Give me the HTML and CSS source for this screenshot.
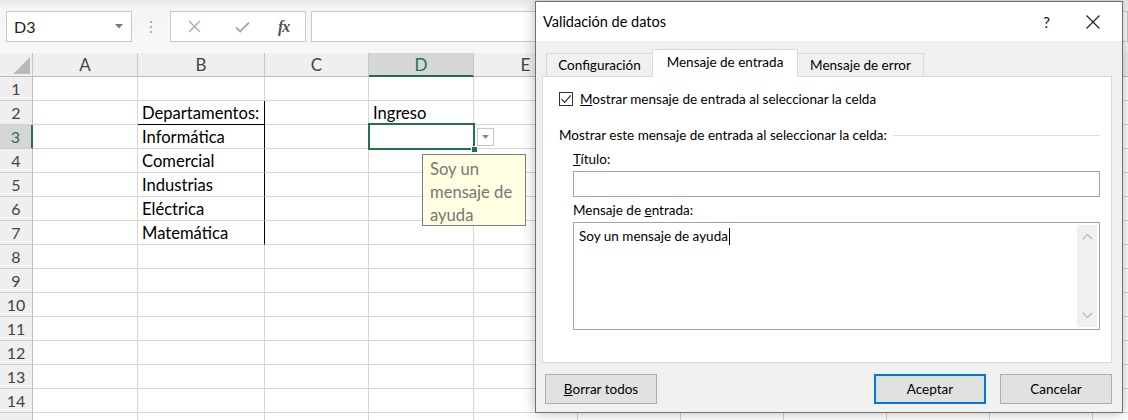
FILE: index.html
```html
<!DOCTYPE html>
<html lang="es">
<head>
<meta charset="utf-8">
<title>Validación de datos</title>
<link rel="stylesheet" href="styles.css">
</head>
<body>
<div class="app">
  <div class="fbar">
    <div class="namebox"><span>D3</span><svg class="nb-arrow" width="8" height="5" viewBox="0 0 8 5"><polygon points="0,0 8,0 4,4.5" fill="#7a7a7a"/></svg></div>
    <div class="grip"><span></span><span></span><span></span></div>
    <div class="fbtns">
      <svg class="ico-x" width="13" height="13" viewBox="0 0 13 13"><path d="M1 1L12 12M12 1L1 12" stroke="#a8a8a8" stroke-width="1.3" fill="none"/></svg>
      <svg class="ico-ok" width="15" height="12" viewBox="0 0 15 12"><path d="M1 6.5L5.2 10.5L14 1.5" stroke="#a8a8a8" stroke-width="1.8" fill="none"/></svg>
      <span class="fx">fx</span>
    </div>
    <div class="finput"></div>
  </div>

  <div class="sheet">
    <div class="row hdr">
      <div class="c rh corner"><svg width="17" height="17" viewBox="0 0 17 17"><polygon points="17,0 17,17 0,17" fill="#b9b9b9"/></svg></div>
      <div class="c wa ch">A</div>
      <div class="c wb ch">B</div>
      <div class="c wc ch">C</div>
      <div class="c wd ch on">D</div>
      <div class="c we ch">E</div>
      <div class="c rest ch"></div>
    </div>
    <div class="row"><div class="c rh">1</div><div class="c wa"></div><div class="c wb"></div><div class="c wc"></div><div class="c wd"></div><div class="c we"></div><div class="c rest"></div></div>
    <div class="row"><div class="c rh">2</div><div class="c wa"></div><div class="c wb bb br">Departamentos:</div><div class="c wc"></div><div class="c wd">Ingreso</div><div class="c we"></div><div class="c rest"></div></div>
    <div class="row"><div class="c rh on">3</div><div class="c wa"></div><div class="c wb br">Informática</div><div class="c wc"></div><div class="c wd"></div><div class="c we"></div><div class="c rest"></div></div>
    <div class="row"><div class="c rh">4</div><div class="c wa"></div><div class="c wb br">Comercial</div><div class="c wc"></div><div class="c wd"></div><div class="c we"></div><div class="c rest"></div></div>
    <div class="row"><div class="c rh">5</div><div class="c wa"></div><div class="c wb br">Industrias</div><div class="c wc"></div><div class="c wd"></div><div class="c we"></div><div class="c rest"></div></div>
    <div class="row"><div class="c rh">6</div><div class="c wa"></div><div class="c wb br">Eléctrica</div><div class="c wc"></div><div class="c wd"></div><div class="c we"></div><div class="c rest"></div></div>
    <div class="row"><div class="c rh">7</div><div class="c wa"></div><div class="c wb br">Matemática</div><div class="c wc"></div><div class="c wd"></div><div class="c we"></div><div class="c rest"></div></div>
    <div class="row"><div class="c rh">8</div><div class="c wa"></div><div class="c wb"></div><div class="c wc"></div><div class="c wd"></div><div class="c we"></div><div class="c rest"></div></div>
    <div class="row"><div class="c rh">9</div><div class="c wa"></div><div class="c wb"></div><div class="c wc"></div><div class="c wd"></div><div class="c we"></div><div class="c rest"></div></div>
    <div class="row"><div class="c rh">10</div><div class="c wa"></div><div class="c wb"></div><div class="c wc"></div><div class="c wd"></div><div class="c we"></div><div class="c rest"></div></div>
    <div class="row"><div class="c rh">11</div><div class="c wa"></div><div class="c wb"></div><div class="c wc"></div><div class="c wd"></div><div class="c we"></div><div class="c rest"></div></div>
    <div class="row"><div class="c rh">12</div><div class="c wa"></div><div class="c wb"></div><div class="c wc"></div><div class="c wd"></div><div class="c we"></div><div class="c rest"></div></div>
    <div class="row"><div class="c rh">13</div><div class="c wa"></div><div class="c wb"></div><div class="c wc"></div><div class="c wd"></div><div class="c we"></div><div class="c rest"></div></div>
    <div class="row"><div class="c rh">14</div><div class="c wa"></div><div class="c wb"></div><div class="c wc"></div><div class="c wd"></div><div class="c we"></div><div class="c rest"></div></div>
    <div class="row"><div class="c rh">15</div><div class="c wa"></div><div class="c wb"></div><div class="c wc"></div><div class="c wd"></div><div class="c we"></div><div class="c rest"></div></div>
  </div>

  <div class="selection"><span class="handle"></span></div>
  <div class="dd-btn"><svg width="7" height="4" viewBox="0 0 7 4"><polygon points="0,0 7,0 3.5,4" fill="#8a8a8a"/></svg></div>
  <div class="tip">Soy un<br>mensaje de<br>ayuda</div>
</div>

<div class="dlg">
  <div class="dlg-head">
    <span class="dlg-title">Validación de datos</span>
    <span class="dlg-help">?</span>
    <svg class="dlg-close" width="14" height="14" viewBox="0 0 14 14"><path d="M0.5 0.5L13.5 13.5M13.5 0.5L0.5 13.5" stroke="#1a1a1a" stroke-width="1.1" fill="none"/></svg>
  </div>
  <div class="dlg-body">
    <div class="tabs">
      <div class="tab t1">Configuración</div>
      <div class="tab t2 active">Mensaje de entrada</div>
      <div class="tab t3">Mensaje de error</div>
    </div>
    <div class="panel">
      <div class="chk-row">
        <span class="chk"><svg width="12" height="12" viewBox="0 0 12 12"><path d="M1.5 6.2L4.6 9.3L10.8 2.4" stroke="#2b2b2b" stroke-width="1.2" fill="none"/></svg></span>
        <span><u>M</u>ostrar mensaje de entrada al seleccionar la celda</span>
      </div>
      <div class="group"><span>Mostrar este mensaje de entrada al seleccionar la celda:</span><span class="rule"></span></div>
      <div class="fields">
        <div class="lbl"><u>T</u>ítulo:</div>
        <div class="input"></div>
        <div class="lbl lbl2">Mensaje de <u>e</u>ntrada:</div>
        <div class="textarea">
          <div class="ta-text">Soy un mensaje de ayuda<span class="caret"></span></div>
          <div class="vscroll">
            <svg width="11" height="7" viewBox="0 0 11 7"><path d="M1 6L5.5 1.5L10 6" stroke="#b5b5b5" stroke-width="1.1" fill="none"/></svg>
            <svg width="11" height="7" viewBox="0 0 11 7"><path d="M1 1L5.5 5.5L10 1" stroke="#b5b5b5" stroke-width="1.1" fill="none"/></svg>
          </div>
        </div>
      </div>
    </div>
    <div class="btns">
      <div class="btn"><u>B</u>orrar todos</div>
      <div class="spacer"></div>
      <div class="btn primary">Aceptar</div>
      <div class="btn">Cancelar</div>
    </div>
  </div>
</div>
</body>
</html>
```

FILE: styles.css
```css
* { box-sizing: border-box; }
html, body { margin: 0; padding: 0; }
body {
  width: 1128px;
  height: 420px;
  overflow: hidden;
  position: relative;
  background: #fff;
  font-family: Lato, "Noto Sans", sans-serif;
  color: #000;
}

.app { position: relative; width: 1128px; height: 420px; }

/* formula bar */
.fbar {
  height: 53px;
  display: flex;
  align-items: flex-start;
  padding-top: 11px;
  background: linear-gradient(#e9e9e9 0, #f5f5f5 8px, #f7f7f7 100%);
}
.namebox {
  margin-left: 6px;
  width: 126px;
  height: 31px;
  background: #fff;
  border: 1px solid #c9c9c9;
  display: flex;
  align-items: center;
  justify-content: space-between;
  padding: 0 8px 0 7px;
  font-size: 16px;
  color: #222;
}
.grip {
  width: 38px;
  height: 31px;
  display: flex;
  flex-direction: column;
  align-items: center;
  justify-content: center;
  gap: 3px;
}
.grip span { width: 2px; height: 2px; background: #b0b0b0; }
.fbtns {
  width: 136px;
  height: 31px;
  background: #fff;
  border: 1px solid #c9c9c9;
  display: flex;
  align-items: center;
  padding-left: 17px;
}
.ico-x { margin-right: 34px; }
.ico-ok { margin-right: 28px; }
.fx {
  font-family: "Liberation Serif", serif;
  font-style: italic;
  font-weight: bold;
  font-size: 16px;
  color: #555;
  letter-spacing: -1px;
}
.finput {
  margin-left: 5px;
  flex: 1;
  height: 31px;
  background: #fff;
  border: 1px solid #c9c9c9;
}

/* sheet */
.sheet { display: flex; flex-direction: column; }
.row { display: flex; height: 24px; }
.c {
  height: 24px;
  flex: none;
  border-right: 1px solid #d6d6d6;
  border-bottom: 1px solid #d6d6d6;
  font-size: 16.6px;
  line-height: 24px;
  padding: 0 4px;
  white-space: nowrap;
  overflow: hidden;
}
.rh {
  width: 33px;
  background: #efefef;
  border-right: 1px solid #bcbcbc;
  border-bottom: 1px solid #cfcfcf;
  text-align: center;
  color: #444;
  padding: 0;
  font-size: 16px;
}
.rh.on { background: #d6d6d6; border-right: 2px solid #217346; color: #217346; }
.wa { width: 105px; }
.wb { width: 127px; }
.wc { width: 104px; }
.wd { width: 105px; }
.we { width: 104px; }
.rest {
  flex: 1;
  border-right: 0;
  background-image: repeating-linear-gradient(to right, transparent 0, transparent 102px, #d6d6d6 102px, #d6d6d6 103px);
}
.hdr .c {
  background-color: #efefef;
  border-bottom: 1px solid #bcbcbc;
  border-right-color: #c8c8c8;
  text-align: center;
  color: #444;
  font-size: 17px;
}
.hdr .rest { background-image: repeating-linear-gradient(to right, transparent 0, transparent 102px, #c8c8c8 102px, #c8c8c8 103px); }
.hdr .ch.on { background-color: #d6d6d6; color: #217346; border-bottom: 2px solid #217346; line-height: 23px; }
.corner { display: flex; align-items: flex-end; justify-content: flex-end; padding: 0 2px 2px 0; }
.bb { border-bottom-color: #000; }
.br { border-right-color: #000; }

.selection {
  position: absolute;
  left: 368px;
  top: 123px;
  width: 107px;
  height: 27px;
  border: 2px solid #217346;
}
.handle {
  position: absolute;
  right: -5px;
  bottom: -5px;
  width: 7px;
  height: 7px;
  background: #217346;
  border: 1px solid #fff;
}
.dd-btn {
  position: absolute;
  left: 477px;
  top: 128px;
  width: 17px;
  height: 18px;
  background: #fff;
  border: 1px solid #c6c6c6;
  display: flex;
  align-items: center;
  justify-content: center;
}
.tip {
  position: absolute;
  left: 422px;
  top: 154px;
  width: 104px;
  height: 72px;
  background: #ffffe1;
  border: 1px solid #7d7d7d;
  color: #767676;
  font-size: 16.6px;
  line-height: 23px;
  padding: 3px 0 0 7px;
}

/* dialog */
.dlg {
  position: absolute;
  left: 535px;
  top: 1px;
  width: 588px;
  height: 412px;
  border: 1px solid #707070;
  background: #f0f0f0;
  box-shadow: 0 0 12px rgba(0, 0, 0, 0.28);
  display: flex;
  flex-direction: column;
  font-size: 13.5px;
}
.dlg-head {
  height: 39px;
  flex: none;
  background: #fff;
  display: flex;
  align-items: center;
  padding-left: 7px;
}
.dlg-title { font-size: 14.5px; flex: 1; }
.dlg-help { font-size: 15px; margin-right: 36px; color: #111; }
.dlg-close { margin-right: 22px; }
.dlg-body {
  flex: 1;
  padding: 8px 10px 0 6px;
  display: flex;
  flex-direction: column;
}
.tabs {
  height: 27px;
  display: flex;
  align-items: flex-end;
  padding-left: 4px;
  position: relative;
  z-index: 1;
}
.tab {
  height: 23px;
  border: 1px solid #d9d9d9;
  border-bottom: 0;
  background: #f0f0f0;
  display: flex;
  align-items: center;
  justify-content: center;
  padding-bottom: 1px;
}
.t1 { width: 106px; border-right: 0; }
.t2 { width: 146px; }
.t3 { width: 126px; border-left: 0; }
.tab.active { height: 28px; margin-bottom: -1px; background: #fff; padding-bottom: 4px; }
.panel {
  height: 287px;
  background: #fff;
  border: 1px solid #d9d9d9;
  padding: 13px 11px 0 16px;
}
.chk-row { display: flex; align-items: center; gap: 7px; height: 18px; }
.chk {
  width: 14px;
  height: 14px;
  border: 1px solid #333;
  display: flex;
  align-items: center;
  justify-content: center;
}
.group { display: flex; align-items: center; margin-top: 18px; height: 18px; }
.rule { flex: 1; height: 1px; background: #dcdcdc; margin-left: 6px; margin-top: 1px; }
.fields { padding-left: 14px; }
.lbl { height: 18px; line-height: 18px; margin-top: 6px; }
.lbl2 { margin-top: 4px; }
.input { height: 26px; margin-top: 3px; border: 1px solid #a5a5a5; background: #fff; }
.textarea {
  position: relative;
  height: 108px;
  margin-top: 3px;
  border: 1px solid #a5a5a5;
  background: #fff;
}
.ta-text { padding: 4px 0 0 5px; line-height: 18px; display: flex; align-items: center; }
.caret { display: inline-block; width: 1px; height: 17px; background: #000; margin-left: 1px; }
.vscroll {
  position: absolute;
  right: 2px;
  top: 2px;
  bottom: 2px;
  width: 20px;
  background: #f0f0f0;
  display: flex;
  flex-direction: column;
  align-items: center;
  justify-content: space-between;
  padding: 8px 0 8px;
}
.btns { display: flex; margin-top: 11px; padding-left: 3px; }
.spacer { flex: 1; }
.btn {
  width: 112px;
  height: 30px;
  background: #e1e1e1;
  border: 1px solid #adadad;
  display: flex;
  align-items: center;
  justify-content: center;
}
.btn.primary { border: 2px solid #0078d7; margin-right: 14px; }
```
